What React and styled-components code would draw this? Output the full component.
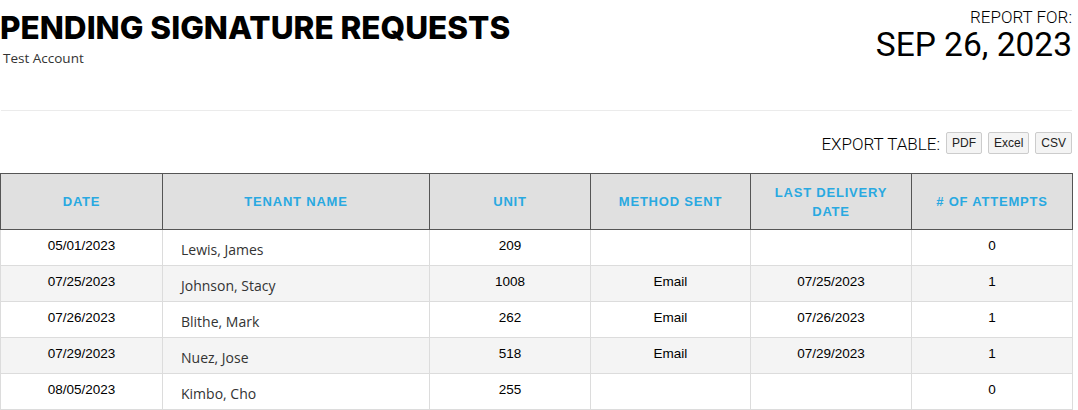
import React from "react";
import styled, { createGlobalStyle } from "styled-components";

const GlobalStyle = createGlobalStyle`
  body {
    margin: 0;
    background: #fff;
    font-family: "Liberation Sans", Arial, sans-serif;
  }
`;

const rows = [
  { date: "05/01/2023", name: "Lewis, James", unit: "209", method: "", last: "", attempts: 0 },
  { date: "07/25/2023", name: "Johnson, Stacy", unit: "1008", method: "Email", last: "07/25/2023", attempts: 1 },
  { date: "07/26/2023", name: "Blithe, Mark", unit: "262", method: "Email", last: "07/26/2023", attempts: 1 },
  { date: "07/29/2023", name: "Nuez, Jose", unit: "518", method: "Email", last: "07/29/2023", attempts: 1 },
  { date: "08/05/2023", name: "Kimbo, Cho", unit: "255", method: "", last: "", attempts: 0 },
];

const columns = [
  { label: "DATE", width: 162 },
  { label: "TENANT NAME", width: 267 },
  { label: "UNIT", width: 161 },
  { label: "METHOD SENT", width: 160 },
  { label: "LAST DELIVERY DATE", width: 161 },
  { label: "# OF ATTEMPTS", width: 161 },
];

const App = () => {
  return (
    <>
      <GlobalStyle />
      <Page>
        <Header>
          <TitleBlock>
            <Title>PENDING SIGNATURE REQUESTS</Title>
            <Account>Test Account</Account>
          </TitleBlock>
          <ReportBlock>
            <ReportLabel>REPORT FOR:</ReportLabel>
            <ReportDate>SEP 26, 2023</ReportDate>
          </ReportBlock>
        </Header>
        <Divider />
        <ExportBar>
          <ExportLabel>EXPORT TABLE:</ExportLabel>
          <ExportButton>PDF</ExportButton>
          <ExportButton>Excel</ExportButton>
          <ExportButton>CSV</ExportButton>
        </ExportBar>
        <Table>
          <colgroup>
            {columns.map((c) => (
              <col key={c.label} width={c.width} />
            ))}
          </colgroup>
          <thead>
            <tr>
              {columns.map((c) => (
                <HeadCell key={c.label}>
                  {c.label === "LAST DELIVERY DATE" ? (
                    <>
                      LAST DELIVERY
                      <br />
                      DATE
                    </>
                  ) : (
                    c.label
                  )}
                </HeadCell>
              ))}
            </tr>
          </thead>
          <tbody>
            {rows.map((r, i) => (
              <Row key={r.date + r.name} $striped={i % 2 === 1}>
                <Cell>{r.date}</Cell>
                <NameCell>{r.name}</NameCell>
                <Cell>{r.unit}</Cell>
                <Cell>{r.method}</Cell>
                <Cell>{r.last}</Cell>
                <Cell>{r.attempts}</Cell>
              </Row>
            ))}
          </tbody>
        </Table>
      </Page>
    </>
  );
};

export default App;

const Page = styled.div`
  width: 1072px;
  padding-top: 8px;
`;

const Header = styled.div`
  display: flex;
  justify-content: space-between;
  align-items: flex-start;
  height: 102px;
`;

const TitleBlock = styled.div`
  display: flex;
  flex-direction: column;
`;

const Title = styled.h1`
  margin: 0;
  font-family: "Inter", sans-serif;
  font-weight: 800;
  font-size: 31.5px;
  line-height: 40px;
  letter-spacing: 0;
  color: #000;
`;

const Account = styled.div`
  margin-left: 3px;
  margin-top: 1px;
  font-family: "Open Sans", sans-serif;
  font-size: 13.5px;
  color: #333;
`;

const ReportBlock = styled.div`
  display: flex;
  flex-direction: column;
  align-items: flex-end;
`;

const ReportLabel = styled.div`
  font-family: "Roboto", sans-serif;
  font-weight: 300;
  font-size: 17px;
  line-height: 18px;
  color: #000;
`;

const ReportDate = styled.div`
  font-family: "Roboto", sans-serif;
  font-weight: 400;
  font-size: 33.5px;
  line-height: 38px;
  color: #000;
`;

const Divider = styled.hr`
  margin: 0 0 0 1px;
  border: none;
  border-top: 1px solid #ebebeb;
`;

const ExportBar = styled.div`
  display: flex;
  justify-content: flex-end;
  align-items: center;
  gap: 6px;
  margin-top: 20px;
  margin-bottom: 19px;
`;

const ExportLabel = styled.span`
  font-family: "Roboto", sans-serif;
  font-weight: 300;
  font-size: 17px;
  color: #000;
  margin-top: 3px;
`;

const ExportButton = styled.button`
  font-family: "Liberation Sans", Arial, sans-serif;
  font-size: 12px;
  color: #222;
  background: #f4f4f4;
  border: 1px solid #ccc;
  border-radius: 2px;
  height: 22px;
  padding: 0 5px;
`;

const Table = styled.table`
  width: 1072px;
  border-collapse: collapse;
  table-layout: fixed;
`;

const HeadCell = styled.th`
  height: 55px;
  padding: 0;
  background: #e0e0e0;
  border: 1px solid #555;
  color: #29a9e1;
  font-family: "Liberation Sans", Arial, sans-serif;
  font-size: 13px;
  font-weight: 700;
  letter-spacing: 0.8px;
  line-height: 19px;
`;

const Row = styled.tr`
  height: 36px;
  background: ${(p) => (p.$striped ? "#f4f4f4" : "#fff")};
`;

const Cell = styled.td`
  padding: 0 0 3px;
  border: 1px solid #dcdcdc;
  text-align: center;
  font-family: "Liberation Sans", Arial, sans-serif;
  font-size: 13.5px;
  line-height: 16px;
  color: #000;
`;

const NameCell = styled.td`
  padding: 5px 0 0 18px;
  border: 1px solid #dcdcdc;
  font-family: "Open Sans", sans-serif;
  font-size: 14px;
  line-height: 18px;
  color: #333;
`;
